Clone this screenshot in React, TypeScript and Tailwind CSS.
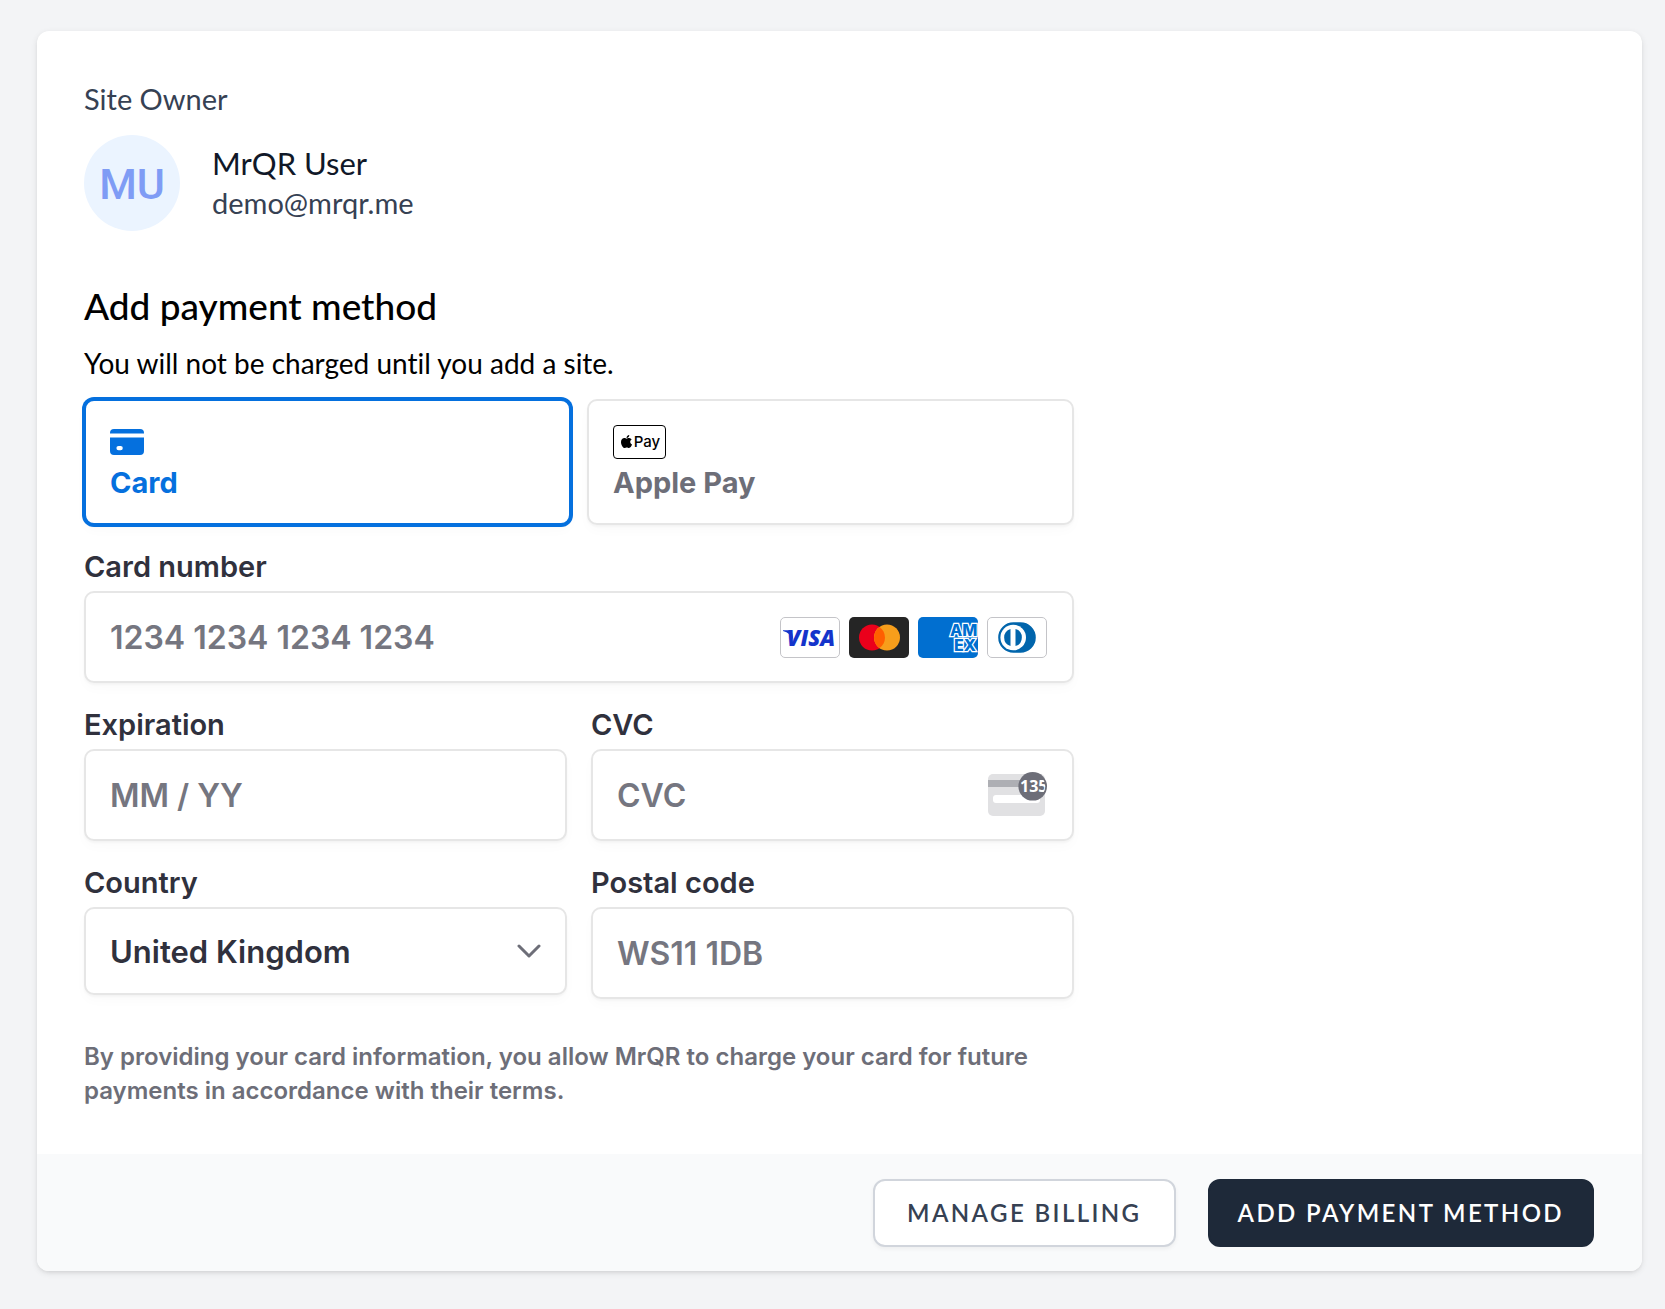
import type { ReactNode } from "react";
import { FaApple } from "react-icons/fa";

const fieldBox =
  "w-full rounded-[10px] border-2 border-[#e6e6e6] bg-white px-6 font-semibold text-[#30313d] outline-none placeholder:text-[#757680] placeholder:opacity-100 shadow-[0_2px_2px_rgba(0,0,0,0.03),0_6px_12px_rgba(0,0,0,0.02)] focus:border-[#0570de]";
const inputBox = `${fieldBox} h-[92px] text-[32px]`;

function Field({ id, label, children }: { id: string; label: string; children: ReactNode }) {
  return (
    <div className="flex flex-col gap-1.5">
      <label htmlFor={id} className="text-[29px] leading-9 font-semibold text-[#30313d]">
        {label}
      </label>
      <div className="relative">{children}</div>
    </div>
  );
}

function CardIcon() {
  return (
    <svg width="34" height="26" viewBox="0 0 34 26" fill="currentColor" aria-hidden="true">
      <path d="M4 0h26a4 4 0 0 1 4 4v.5H0V4a4 4 0 0 1 4-4Z" />
      <path
        fillRule="evenodd"
        d="M0 8.5h34V22a4 4 0 0 1-4 4H4a4 4 0 0 1-4-4V8.5Zm8.6 8.4a2.2 2.2 0 0 0 0 4.4h2a2.2 2.2 0 0 0 0-4.4h-2Z"
      />
    </svg>
  );
}

function ApplePayMark() {
  return (
    <span className="flex h-[34px] w-[53px] items-center justify-center rounded-[4px] border border-black bg-white pb-0.5 text-black" aria-hidden="true">
      <FaApple size={15} />
      <span className="text-[15px] leading-none font-medium">Pay</span>
    </span>
  );
}

function Visa() {
  return (
    <svg width="60" height="41" viewBox="0 0 60 41" role="img" aria-label="Visa">
      <rect x="0.5" y="0.5" width="59" height="40" rx="4.5" fill="#fff" stroke="#c4c4c8" />
      <path d="M3 13.200h7c1 0 1.600.6 1.800 1.500l1.600 8.300C11.500 18.200 8 15.200 3 13.900Z" fill="#1434cb" />
      <text x="31" y="28.800" textAnchor="middle" fontFamily="Open Sans" fontWeight="800" fontStyle="italic" fontSize="22" fill="#1434cb">
        VISA
      </text>
    </svg>
  );
}

function Mastercard() {
  return (
    <svg width="60" height="41" viewBox="0 0 60 41" role="img" aria-label="Mastercard">
      <rect width="60" height="41" rx="5" fill="#252525" />
      <circle cx="23" cy="20.500" r="13" fill="#eb001b" />
      <circle cx="38" cy="20.500" r="13" fill="#f79e1b" />
      <path d="M30.500 9.900a13 13 0 0 1 0 21.200a13 13 0 0 1 0-21.200Z" fill="#ff5f00" />
    </svg>
  );
}

function Amex() {
  return (
    <svg width="60" height="41" viewBox="0 0 60 41" role="img" aria-label="American Express" className="rounded-[5px]">
      <rect width="60" height="41" fill="#016fd0" />
      <text fontFamily="Inter" fontWeight="800" fontSize="16" fill="#016fd0" stroke="#fff" strokeWidth="2.500" strokeLinejoin="miter" paintOrder="stroke">
        <tspan x="32" y="18.800">AM</tspan>
        <tspan x="36" y="33.500">EX</tspan>
      </text>
    </svg>
  );
}

function Diners() {
  return (
    <svg width="60" height="41" viewBox="0 0 60 41" role="img" aria-label="Diners Club">
      <rect x="0.5" y="0.5" width="59" height="40" rx="4.5" fill="#fff" stroke="#c4c4c8" />
      <path d="M26.500 5.200h7A15.300 15.300 0 0 1 33.500 35.800h-7A15.300 15.300 0 0 1 26.500 5.200Z" fill="#0165ac" />
      <circle cx="26.200" cy="20.500" r="12.800" fill="#fff" />
      <path d="M23.500 11.900v17.200a9 9 0 0 1 0-17.200ZM28.500 11.900a9 9 0 0 1 0 17.200Z" fill="#0165ac" />
    </svg>
  );
}

function CvcIcon() {
  return (
    <svg width="60" height="46" viewBox="0 0 60 46" aria-hidden="true">
      <clipPath id="badge">
        <circle cx="45.700" cy="14.300" r="12.500" />
      </clipPath>
      <rect x="1" y="2" width="57" height="42" rx="5" fill="#e1e1e3" />
      <rect x="1" y="8" width="57" height="7" fill="#aeafb4" />
      <rect x="6" y="23" width="47" height="8" rx="3" fill="#fff" />
      <circle cx="45.700" cy="14.300" r="14.300" fill="#6d6e78" />
      <text x="33" y="20" fontFamily="Open Sans" fontWeight="700" fontSize="16" fill="#fff" clipPath="url(#badge)">
        135
      </text>
    </svg>
  );
}

export default function App() {
  return (
    <main className="min-h-screen bg-gray-100 pt-[31px] pr-[23px] pb-[38px] pl-[37px] font-['Lato',sans-serif] [font-variant-ligatures:none]">
      <section className="overflow-hidden rounded-xl bg-white shadow-[0_2px_6px_rgba(0,0,0,0.1),0_2px_4px_-2px_rgba(0,0,0,0.1)]">
        <div className="pt-12 pr-12 pb-[46px] pl-[47px]">
          <h3 className="text-[29px] leading-10 text-gray-700">Site Owner</h3>
          <div className="mt-4 flex items-center gap-8">
            <div className="flex size-24 items-center justify-center rounded-full bg-[#ebf4ff] pt-0.5 font-['Roboto',sans-serif] text-[43px] font-medium text-[#7f9cf5]">
              MU
            </div>
            <div>
              <div className="text-[31px] leading-10 text-gray-900">MrQR User</div>
              <div className="text-[29px] leading-10 text-gray-700">demo@mrqr.me</div>
            </div>
          </div>

          <h2 className="mt-[50px] text-[37px] leading-[50px] font-medium text-black">Add payment method</h2>
          <p className="mt-3 text-[28px] leading-10 text-black">You will not be charged until you add a site.</p>

          <form id="payment" className="mt-4 max-w-[990px] font-['Inter',sans-serif]">
            <div className="grid grid-cols-2 gap-4">
              <button
                type="button"
                aria-pressed="true"
                className="flex flex-col items-start gap-1.5 rounded-[10px] border-2 border-[#0570de] bg-white px-6 pt-6 pb-[22px] text-left text-[#0570de] shadow-[0_0_0_2px_#0570de,0_2px_2px_rgba(0,0,0,0.03),0_6px_12px_rgba(0,0,0,0.02)]"
              >
                <span className="flex h-[34px] items-center">
                  <CardIcon />
                </span>
                <span className="text-[29px] leading-9 font-bold">Card</span>
              </button>
              <button
                type="button"
                aria-pressed="false"
                className="flex flex-col items-start gap-1.5 rounded-[10px] border-2 border-[#e6e6e6] bg-white px-6 pt-6 pb-[22px] text-left text-[#6d6e78] shadow-[0_2px_2px_rgba(0,0,0,0.03),0_6px_12px_rgba(0,0,0,0.02)]"
              >
                <ApplePayMark />
                <span className="text-[29px] leading-9 font-bold">Apple Pay</span>
              </button>
            </div>

            <div className="mt-6">
              <Field id="number" label="Card number">
                <input id="number" type="text" inputMode="numeric" placeholder="1234 1234 1234 1234" className={`${inputBox} pr-[300px]`} />
                <div className="pointer-events-none absolute inset-y-0 right-[27px] flex items-center gap-[9px]">
                  <Visa />
                  <Mastercard />
                  <Amex />
                  <Diners />
                </div>
              </Field>
            </div>

            <div className="mt-6 grid grid-cols-2 gap-6">
              <Field id="expiry" label="Expiration">
                <input id="expiry" type="text" inputMode="numeric" placeholder="MM / YY" className={inputBox} />
              </Field>
              <Field id="cvc" label="CVC">
                <input id="cvc" type="text" inputMode="numeric" placeholder="CVC" className={inputBox} />
                <div className="pointer-events-none absolute inset-y-0 right-[27px] flex items-center">
                  <CvcIcon />
                </div>
              </Field>
              <Field id="country" label="Country">
                <select id="country" defaultValue="GB" className={`${fieldBox} h-[88px] appearance-none pt-0.5 text-[31px]`}>
                  <option value="GB">United Kingdom</option>
                </select>
                <div className="pointer-events-none absolute inset-y-0 right-[26px] flex items-center">
                  <svg width="24" height="14" viewBox="0 0 24 14" fill="none" stroke="#6d6e78" strokeWidth="3" strokeLinecap="round" strokeLinejoin="round" aria-hidden="true">
                    <path d="M2 2l10 10L22 2" />
                  </svg>
                </div>
              </Field>
              <Field id="postal" label="Postal code">
                <input id="postal" type="text" placeholder="WS11 1DB" className={inputBox} />
              </Field>
            </div>

            <p className="mt-[41px] text-[24px] leading-[34px] font-semibold text-[#6d6e78]">
              By providing your card information, you allow MrQR to charge your card for future payments in accordance with their terms.
            </p>
          </form>
        </div>

        <footer className="flex justify-end gap-8 bg-gray-50 px-12 pt-[25px] pb-6">
          <button
            type="button"
            className="h-[68px] rounded-xl border-2 border-gray-300 bg-white px-8 text-[24px] font-semibold tracking-widest text-gray-700 uppercase shadow-[0_2px_4px_rgba(0,0,0,0.05)]"
          >
            Manage billing
          </button>
          <button
            type="submit"
            form="payment"
            className="h-[68px] rounded-xl border-2 border-gray-800 bg-gray-800 px-7 text-[24px] font-semibold tracking-widest text-white uppercase"
          >
            Add payment method
          </button>
        </footer>
      </section>
    </main>
  );
}
